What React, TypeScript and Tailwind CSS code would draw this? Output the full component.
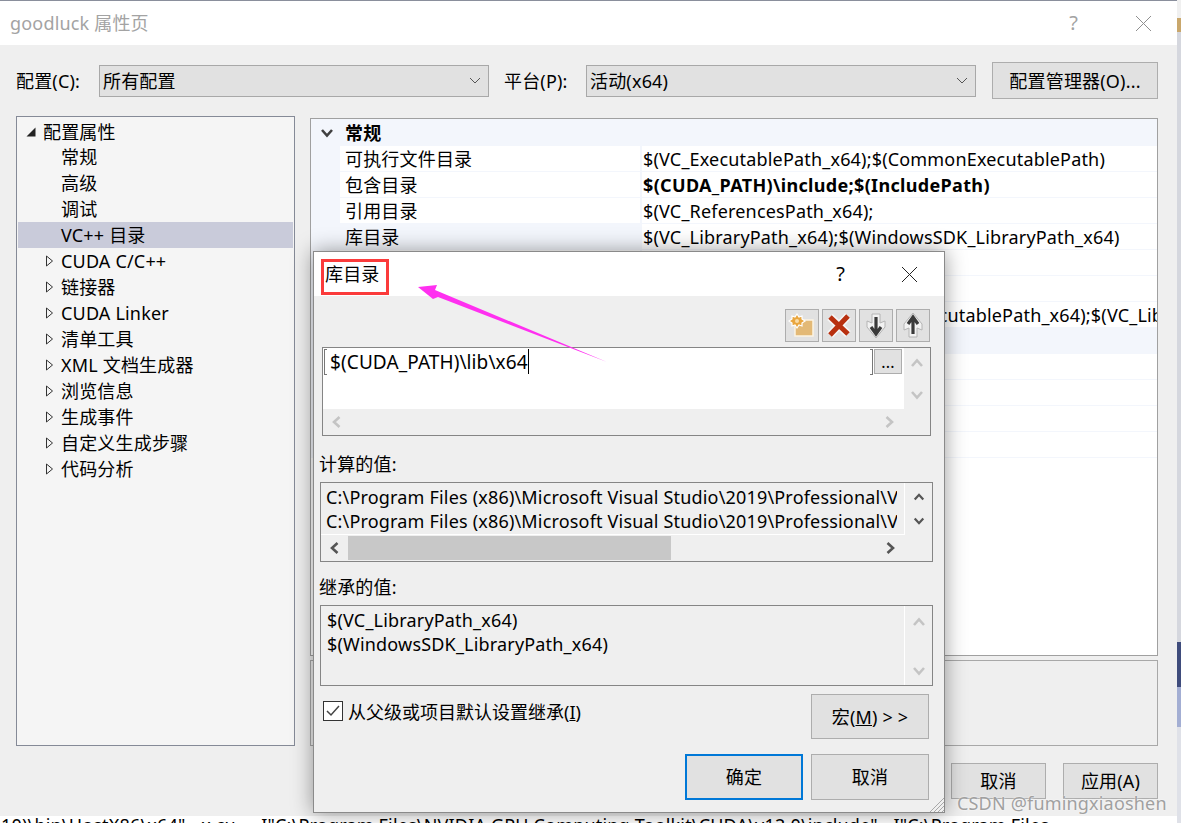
const treeItems = [
  "CUDA C/C++",
  "链接器",
  "CUDA Linker",
  "清单工具",
  "XML 文档生成器",
  "浏览信息",
  "生成事件",
  "自定义生成步骤",
  "代码分析",
];

const propRows = [
  { name: "可执行文件目录", value: "$(VC_ExecutablePath_x64);$(CommonExecutablePath)" },
  { name: "包含目录", value: "$(CUDA_PATH)\\include;$(IncludePath)", bold: true },
  { name: "引用目录", value: "$(VC_ReferencesPath_x64);" },
  { name: "库目录", value: "$(VC_LibraryPath_x64);$(WindowsSDK_LibraryPath_x64)", selected: true },
  { name: "", value: "" },
  { name: "", value: "" },
  { name: "", value: "$(VC_ExecutablePath_x64);$(VSExecutablePath_x64);$(VC_LibraryPath_x64)" },
];

const Chevron = ({ dir, color, size = 14 }: { dir: "up" | "down" | "left" | "right"; color: string; size?: number }) => {
  const d = {
    up: "M2 10 7 4.5 12 10",
    down: "M2 4 7 9.5 12 4",
    left: "M9.5 2 4 7 9.5 12",
    right: "M4.5 2 10 7 4.5 12",
  }[dir];
  return (
    <svg width={size} height={size} viewBox="0 0 14 14" fill="none">
      <path d={d} stroke={color} strokeWidth="2.6" />
    </svg>
  );
};

const Button = ({
  children,
  className = "",
  border = "border border-[#adadad]",
}: {
  children: React.ReactNode;
  className?: string;
  border?: string;
}) => <div className={`flex items-center justify-center bg-[#e1e1e1] ${border} ${className}`}>{children}</div>;

const Combo = ({ label, className }: { label: string; className: string }) => (
  <div className={`flex items-center justify-between h-[32px] bg-[#e1e1e1] border border-[#a8a8a8] pl-[3px] pr-[7px] ${className}`}>
    <span>{label}</span>
    <svg width="12" height="7" viewBox="0 0 12 7" fill="none">
      <path d="M1 1l5 5 5-5" stroke="#555" strokeWidth="1" />
    </svg>
  </div>
);

const TreeRow = ({ label }: { label: string }) => (
  <div className="flex items-center h-[26px] pl-[28px]">
    <svg width="8" height="12" viewBox="0 0 8 12" fill="none" className="mr-[7px]">
      <path d="M.5 1l6 5-6 5z" stroke="#333" strokeWidth="1" />
    </svg>
    <span>{label}</span>
  </div>
);

const ToolButton = ({ children }: { children: React.ReactNode }) => (
  <Button className="w-[34px] h-[33px]">{children}</Button>
);

export default function App() {
  return (
    <div className="relative flex w-[1181px] h-[823px] overflow-hidden bg-white text-black text-[18px] leading-[26px] tracking-[0.18px] [font-family:'Noto_Sans','Noto_Sans_CJK_SC',sans-serif]">
      <div className="flex flex-col w-[1177px]">
        {/* main property window */}
        <div className="relative z-10 flex flex-col shrink-0 w-full h-[816px] bg-[#efefef] border-t border-[#8a8f9c]">
          <div className="flex items-center h-[44px] bg-white pl-[10px] pr-[25px] text-[#a3a3a3]">
            <span className="flex-1">goodluck 属性页</span>
            <span className="mr-[57px] text-[20px]">?</span>
            <svg width="17" height="17" viewBox="0 0 17 17" stroke="#8f8f8f" strokeWidth="1">
              <path d="M1 1l15 15M16 1 1 16" />
            </svg>
          </div>

          <div className="flex items-center h-[71px] pl-[16px]">
            <span className="w-[83px]">配置(C):</span>
            <Combo label="所有配置" className="w-[390px]" />
            <span className="w-[82px] ml-[15px]">平台(P):</span>
            <Combo label="活动(x64)" className="w-[390px]" />
            <Button className="w-[166px] h-[37px] ml-[16px]">配置管理器(O)...</Button>
          </div>

          <div className="flex h-[630px] pl-[16px]">
            <div className="w-[279px] h-[630px] bg-[#f5f5f5] border border-[#858a97] p-px">
              <div className="flex items-center h-[26px] pt-px pl-[8px]">
                <svg width="10" height="10" viewBox="0 0 10 10" className="mr-[7px]">
                  <path d="M9.5.5v9h-9z" fill="#222" />
                </svg>
                <span>配置属性</span>
              </div>
              <div className="pl-[43px] h-[26px]">常规</div>
              <div className="pl-[43px] h-[26px]">高级</div>
              <div className="pl-[43px] h-[26px]">调试</div>
              <div className="pl-[43px] h-[26px] bg-[#c9cbda]">VC++ 目录</div>
              {treeItems.map((t) => (
                <TreeRow key={t} label={t} />
              ))}
            </div>

            <div className="flex flex-col w-[848px] ml-[15px] pt-[2px]">
              <div className="h-[538px] bg-white border border-[#a0a0a0] overflow-hidden">
                <div className="flex items-center h-[27px] pt-px bg-[#f3f6fc] pl-[9px] font-bold">
                  <Chevron dir="down" color="#404040" />
                  <span className="ml-[11px]">常规</span>
                </div>
                {propRows.map((r, i) => (
                  <div key={i} className="flex h-[26px] bg-[#f3f6fc]">
                    <div className={`w-[300px] ml-[29px] h-[25px] pl-[5px] ${r.selected ? "" : "bg-white"}`}>{r.name}</div>
                    <div className={`flex-1 ml-[2px] h-[25px] pl-px bg-white whitespace-nowrap overflow-hidden ${r.bold ? "font-bold tracking-[0.33px]" : ""}`}>
                      {r.value}
                    </div>
                  </div>
                ))}
                <div className="h-[26px] bg-[#f3f6fc]" />
                {[0, 1, 2, 3].map((i) => (
                  <div key={i} className="flex h-[26px] bg-[#f3f6fc]">
                    <div className="w-[300px] ml-[29px] h-[25px] bg-white" />
                    <div className="flex-1 ml-[2px] h-[25px] bg-white" />
                  </div>
                ))}
              </div>
              <div className="h-[86px] mt-[4px] border border-[#a8a8a8]" />
            </div>
          </div>

          <div className="flex justify-end gap-[17px] pt-[17px] pr-[19px]">
            <Button className="w-[95px] h-[36px]">取消</Button>
            <Button className="w-[95px] h-[36px]">应用(A)</Button>
          </div>
        </div>
        <div className="-mt-[4px] pl-px whitespace-pre">
          {'10)\\bin\\HostX86\\x64"  -x cu    -I"C:\\Program Files\\NVIDIA GPU Computing Toolkit\\CUDA\\v12.0\\include"  -I"C:\\Program Files'}
        </div>
      </div>

      {/* sliver of the desktop behind the window */}
      <div className="flex flex-col w-[4px] h-[823px] bg-[#dfe1e8]">
        <div className="h-[18px] bg-[#f0f0f0]" />
        <div className="h-[14px] bg-[#c9a76c]" />
        <div className="h-[610px] bg-[#d5d7de]" />
        <div className="h-[45px] bg-[#3f4c7c]" />
        <div className="h-[40px] bg-[#a3aed3]" />
      </div>

      {/* library directories dialog */}
      <div className="absolute left-[313px] top-[251px] z-20 flex flex-col w-[632px] h-[562px] bg-[#efefef] border border-[#8a8a8a] shadow-[0_0_20px_rgba(0,0,0,0.4)]">
        <div className="flex items-center h-[44px] bg-white pl-[11px] pr-[26px]">
          <span className="flex-1">库目录</span>
          <span className="mr-[56px] text-[20px]">?</span>
          <svg width="17" height="17" viewBox="0 0 17 17" stroke="#222" strokeWidth="1">
            <path d="M1 1l15 15M16 1 1 16" />
          </svg>
        </div>

        <div className="flex justify-end gap-[3px] pt-[13px] pr-[14px]">
          <ToolButton>
            <svg width="32" height="31" viewBox="0 0 32 31">
              <path d="M9 10h18v16H9z" fill="#e3b976" stroke="#fbf3e4" strokeWidth="1.5" />
              <path d="M11 4l2 3 3-1 0 3 3 2-3 2 0 3-3-1-2 3-2-3-3 1 0-3-3-2 3-2 0-3 3 1z" fill="#e9a63f" stroke="#fff" strokeWidth="1.2" />
              <circle cx="11" cy="11" r="2" fill="#f8dca8" />
            </svg>
          </ToolButton>
          <ToolButton>
            <svg width="32" height="31" viewBox="0 0 32 31" fill="none">
              <path d="M7 7l18 17M25 6 7 25" stroke="#f6f6f6" strokeWidth="8" />
              <path d="M7 7l18 17M25 6 7 25" stroke="#b8300f" strokeWidth="5" />
            </svg>
          </ToolButton>
          <ToolButton>
            <svg width="32" height="31" viewBox="0 0 32 31">
              <path d="M12 4h8v9l5-2v6l-9 11-9-11v-6l5 2z" fill="#f2f2f2" stroke="#b4b4b4" strokeWidth="1" />
              <path d="M16 7v17M11 17l5 7 5-7" fill="none" stroke="#3a3a3a" strokeWidth="3.2" />
            </svg>
          </ToolButton>
          <ToolButton>
            <svg width="32" height="31" viewBox="0 0 32 31">
              <path d="M12 27h8v-9l5 2v-6L16 3 7 14v6l5-2z" fill="#f2f2f2" stroke="#b4b4b4" strokeWidth="1" />
              <path d="M16 24V7M11 14l5-7 5 7" fill="none" stroke="#3a3a3a" strokeWidth="3.2" />
            </svg>
          </ToolButton>
        </div>

        {/* editable list */}
        <div className="flex ml-[8px] mt-[5px] w-[609px] h-[89px] border border-[#858585]">
          <div className="flex flex-col w-[581px]">
            <div className="h-[61px] bg-white pl-px pt-px">
              <div className="flex h-[26px]">
                <div className="w-[3px] h-[26px] border-l border-y border-[#777]" />
                <div className="w-[543px] pl-[3px] text-[19px] tracking-[0.1px]">
                  <span className="inline-block h-[25px] border-r border-black">$(CUDA_PATH)\lib\x64</span>
                </div>
                <div className="w-[3px] h-[26px] border-r border-y border-[#777]" />
                <Button className="w-[28px] h-[25px] ml-px text-[16px]">...</Button>
              </div>
            </div>
            <div className="flex items-center justify-between h-[26px] pl-[7px] pr-[8px]">
              <Chevron dir="left" color="#c4c4c4" />
              <Chevron dir="right" color="#c4c4c4" />
            </div>
          </div>
          <div className="flex flex-col items-center pt-[8px] gap-[18px] w-[26px]">
            <Chevron dir="up" color="#c4c4c4" />
            <Chevron dir="down" color="#c4c4c4" />
          </div>
        </div>

        <div className="ml-[5px] mt-[16px] h-[24px] leading-[24px]">计算的值:</div>
        <div className="flex ml-[6px] mt-[6px] w-[613px] h-[80px] border border-[#858585]">
          <div className="flex flex-col w-[584px]">
            <div className="h-[52px] border-r border-b border-white pl-[5px] pt-[2px] leading-[24px] whitespace-nowrap">
              <div className="w-[571px] overflow-hidden">C:\Program Files (x86)\Microsoft Visual Studio\2019\Professional\VC\Tools</div>
              <div className="w-[571px] overflow-hidden">C:\Program Files (x86)\Microsoft Visual Studio\2019\Professional\VC\Tools</div>
            </div>
            <div className="flex items-center h-[26px] pl-[7px]">
              <Chevron dir="left" color="#555" />
              <div className="w-[323px] h-[24px] ml-[6px] bg-[#c8c8c8]" />
              <div className="ml-[212px]">
                <Chevron dir="right" color="#555" />
              </div>
            </div>
          </div>
          <div className="flex flex-col items-center pt-[8px] gap-[12px] w-[27px]">
            <Chevron dir="up" color="#555" size={12} />
            <Chevron dir="down" color="#555" size={12} />
          </div>
        </div>

        <div className="ml-[5px] mt-[13px] h-[24px] leading-[24px]">继承的值:</div>
        <div className="flex ml-[6px] mt-[6px] w-[613px] h-[81px] border border-[#858585]">
          <div className="w-[584px] border-r border-white pl-[6px] pt-[2px] leading-[24px]">
            <div>$(VC_LibraryPath_x64)</div>
            <div>$(WindowsSDK_LibraryPath_x64)</div>
          </div>
          <div className="flex flex-col items-center justify-between pt-[9px] pb-[7px] w-[27px]">
            <Chevron dir="up" color="#c4c4c4" />
            <Chevron dir="down" color="#c4c4c4" />
          </div>
        </div>

        <div className="flex justify-between mt-[8px] pl-[9px] pr-[15px]">
          <div className="flex items-start pt-[5px]">
            <div className="flex items-center justify-center w-[20px] h-[20px] mt-[2px] bg-white border border-[#333]">
              <svg width="14" height="12" viewBox="0 0 14 12" fill="none">
                <path d="M1 6l4 4 8-9" stroke="#444" strokeWidth="1.5" />
              </svg>
            </div>
            <span className="ml-[5px] tracking-normal">
              从父级或项目默认设置继承(<span className="underline">I</span>)
            </span>
          </div>
          <Button className="w-[118px] h-[45px]">
            <span>
              宏(<span className="underline">M</span>) &gt; &gt;
            </span>
          </Button>
        </div>

        <div className="flex justify-end gap-[8px] mt-[15px] pr-[15px]">
          <Button className="w-[118px] h-[46px]" border="border-2 border-[#0078d7]">确定</Button>
          <Button className="w-[118px] h-[46px]">取消</Button>
        </div>

        <svg width="15" height="15" viewBox="0 0 15 15" stroke="#a8a8a8" className="absolute right-0 bottom-0">
          <path d="M15 1 1 15M15 5 5 15M15 9l-6 6M15 13l-2 2" />
        </svg>
      </div>

      {/* annotation drawn over the screenshot */}
      <div className="absolute left-[321px] top-[259px] z-30 w-[68px] h-[36px] border-[3px] border-[#fb3b3b]" />
      <svg width="200" height="90" viewBox="0 0 200 90" className="absolute left-[415px] top-[280px] z-30">
        <path d="M3 7 22 5 20 10 192 82 23 17 18 19z" fill="#ff30f0" />
      </svg>

      <div className="absolute left-[957px] top-[790px] z-30 text-[18px] text-[#a0a0a0] [text-shadow:0_0_2px_#fff]">CSDN @fumingxiaoshen</div>
    </div>
  );
}
